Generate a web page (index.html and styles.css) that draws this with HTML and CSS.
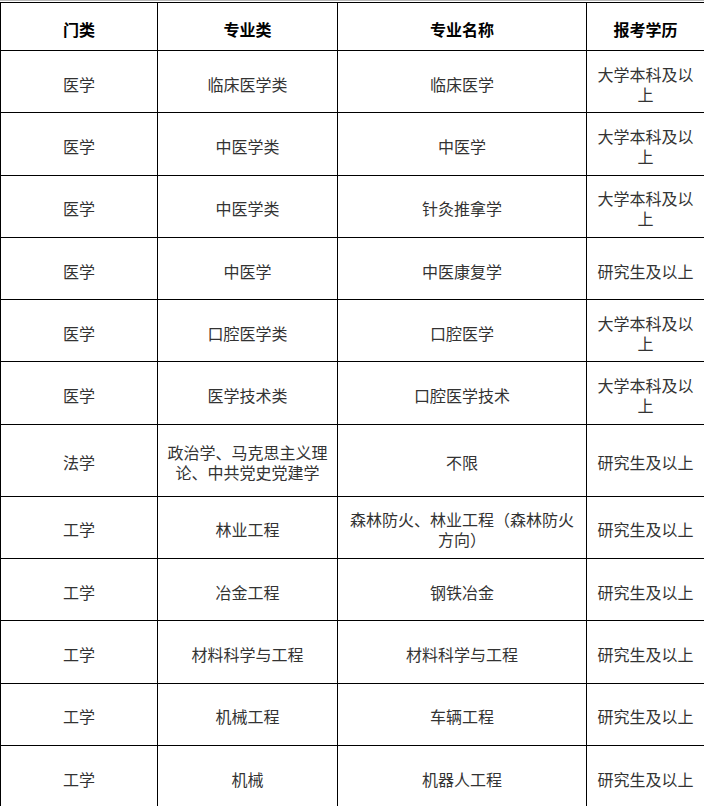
FILE: index.html
```html
<!DOCTYPE html>
<html lang="zh-CN">
<head>
<meta charset="utf-8">
<title>专业目录</title>
<link rel="stylesheet" href="styles.css">
</head>
<body>
<div class="rule"></div>
<table class="grid">
  <colgroup>
    <col class="c1"><col class="c2"><col class="c3"><col class="c4">
  </colgroup>
  <thead>
    <tr class="head"><th>门类</th><th>专业类</th><th>专业名称</th><th>报考学历</th></tr>
  </thead>
  <tbody>
    <tr><td>医学</td><td>临床医学类</td><td>临床医学</td><td>大学本科及以上</td></tr>
    <tr><td>医学</td><td>中医学类</td><td>中医学</td><td>大学本科及以上</td></tr>
    <tr><td>医学</td><td>中医学类</td><td>针灸推拿学</td><td>大学本科及以上</td></tr>
    <tr><td>医学</td><td>中医学</td><td>中医康复学</td><td>研究生及以上</td></tr>
    <tr><td>医学</td><td>口腔医学类</td><td>口腔医学</td><td>大学本科及以上</td></tr>
    <tr><td>医学</td><td>医学技术类</td><td>口腔医学技术</td><td>大学本科及以上</td></tr>
    <tr class="tall"><td>法学</td><td>政治学、马克思主义理论、中共党史党建学</td><td>不限</td><td>研究生及以上</td></tr>
    <tr><td>工学</td><td>林业工程</td><td>森林防火、林业工程（森林防火方向）</td><td>研究生及以上</td></tr>
    <tr><td>工学</td><td>冶金工程</td><td>钢铁冶金</td><td>研究生及以上</td></tr>
    <tr><td>工学</td><td>材料科学与工程</td><td>材料科学与工程</td><td>研究生及以上</td></tr>
    <tr><td>工学</td><td>机械工程</td><td>车辆工程</td><td>研究生及以上</td></tr>
    <tr><td>工学</td><td>机械</td><td>机器人工程</td><td>研究生及以上</td></tr>
  </tbody>
</table>
</body>
</html>
```
FILE: styles.css
```css
html, body {
  margin: 0;
  padding: 0;
  background: #fff;
}
body {
  font-family: "Noto Sans CJK SC", "Noto Sans", sans-serif;
  font-size: 16px;
  color: #333;
}
.rule {
  height: 1px;
  background: #b8b8b8;
  margin-bottom: 1px;
}
.grid {
  width: 704px;
  border-collapse: collapse;
  table-layout: fixed;
}
.c1 { width: 157px; }
.c2 { width: 180px; }
.c3 { width: 249px; }
.c4 { width: 118px; }
.grid th, .grid td {
  border: 1px solid #000;
  text-align: center;
  vertical-align: middle;
  padding: 4px 6px 0;
  line-height: 20px;
  font-weight: normal;
}
.grid th {
  font-weight: bold;
  color: #000;
}
.head { height: 48px; }
.grid tbody tr { height: 62.3px; }
.grid tbody tr.tall { height: 72px; }
```
